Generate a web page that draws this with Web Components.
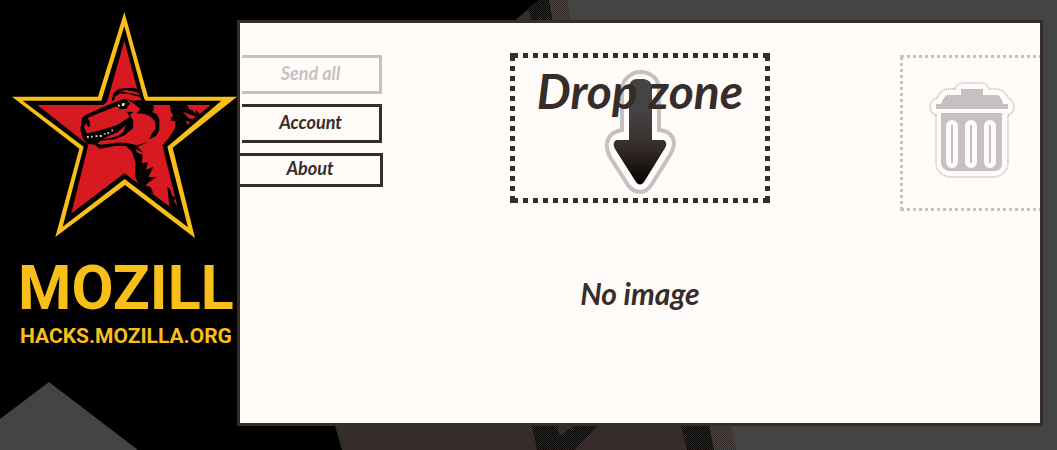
<!DOCTYPE html>
<html lang="en">
<head>
<meta charset="utf-8">
<title>Drop zone</title>
<style>
body { margin: 0; background: #000; }
</style>
</head>
<body>
<hacks-page>
  <hacks-brand slot="brand"></hacks-brand>
  <image-panel slot="panel">
    <menu-button slot="menu" disabled>Send all</menu-button>
    <menu-button slot="menu">Account</menu-button>
    <menu-button slot="menu" wide>About</menu-button>
    <drop-zone slot="drop">Drop zone</drop-zone>
    <trash-zone slot="trash"></trash-zone>
    No image
  </image-panel>
</hacks-page>
<script>
function define(name, html, setup) {
  const template = document.createElement('template');
  template.innerHTML = html;
  customElements.define(name, class extends HTMLElement {
    constructor() {
      super();
      this.attachShadow({ mode: 'open' }).append(template.content.cloneNode(true));
    }
    connectedCallback() { if (setup) setup(this); }
  });
}

define('hacks-page', `
<style>
:host {
  --ink: #362c2a; --paper: #fffbf9; --muted: #c5c1c2; --gold: #f8bf19;
  display: grid; grid-template-columns: 237px minmax(0, 1fr);
  box-sizing: border-box; min-height: 100vh; padding: 20px 14px 24px 0;
  position: relative; overflow: hidden; background: #000;
  font-family: Lato, "Liberation Sans", sans-serif; color: var(--ink);
}
.backdrop { position: absolute; inset: 0; width: 100%; height: 100%; }
::slotted(*) { position: relative; }
</style>
<svg class="backdrop" viewBox="0 0 1057 450" preserveAspectRatio="xMinYMin slice" aria-hidden="true">
  <defs>
    <pattern id="dark" width="2" height="2" patternUnits="userSpaceOnUse"><rect width="2" height="2" fill="#362c2a"/><rect width="1" height="1"/><rect x="1" y="1" width="1" height="1"/></pattern>
    <pattern id="light" width="2" height="2" patternUnits="userSpaceOnUse"><rect width="2" height="2" fill="#444"/><rect width="1" height="1" fill="#362c2a"/><rect x="1" y="1" width="1" height="1" fill="#362c2a"/></pattern>
  </defs>
  <path fill="#444" d="M0 419 49 382 138 450H0ZM553 0H1057V450H720Z"/>
  <path fill="#362c2a" d="M539 0H555L715 450H342L335 426 513 22Z"/>
  <path fill="url(#dark)" d="M539 0H549L553 22H532L528 8ZM532 426H557L560 436 574 426H597L575 450H537ZM681 426H709L714 450H687Z"/>
  <path fill="url(#light)" d="M549 0H567L571 22H553ZM709 426H731L737 450H714Z"/>
</svg>
<slot name="brand"></slot>
<slot name="panel"></slot>`);

define('hacks-brand', `
<style>
:host { display: block; color: var(--gold); font-family: Roboto, "Liberation Sans", sans-serif; font-weight: 700; white-space: nowrap; }
a { display: block; margin-top: -20px; color: inherit; text-decoration: none; }
svg { display: block; width: 240px; height: 245px; }
.name, .site { display: block; padding-left: 18px; }
.name { margin-top: 7px; font-size: 61px; line-height: 72px; }
.site { padding-left: 20px; font-size: 21px; line-height: 25px; }
</style>
<a href="#">
<svg viewBox="0 0 720 735" role="img" aria-label="Star with a dinosaur">
  <path fill="#f8bf19" d="M373 36 444 290H711L518 443 585 714 375 555 166 711 238 446 36 290H294Z"/>
  <path d="M373 78 434 302H664L502 440 564 682 374 537 188 680 251 440 68 302H304Z"/>
  <path fill="#d71920" d="M373 122 421 302 424 315H632L487 435 537 640 373 520 214 640 265 435 112 315H310L322 304Z"/>
  <path d="M335 302 340 280 357 266 400 263 412 267 424 280 436 302H440L462 318 460 333 443 343 410 340 421 327 408 316 385 300Z"/>
  <path d="M440 330 470 342 478 358 478 390 468 408 448 418 456 400 467 387 465 364 452 350 436 343Z"/>
  <path d="M510 312H645L556 390 500 440 487 437 508 412 525 385 527 365 511 361 519 346 512 334Z"/>
  <path fill="#d71920" d="M346 290 360 280 385 282 418 290 426 300 400 302 375 296 340 306ZM360 274 380 270 410 276 424 286 390 279Z"/>
  <path fill="#d71920" d="M560 315H632L599 342 587 329 586 341 574 326 575 335ZM547 334 563 341 588 350 596 343 578 358 566 355ZM556 362 571 366 563 374Z"/>
  <path d="M345 306 298 326 257 345 246 354 241 390 248 415 261 431 283 434 300 446 345 438 378 438 396 455 407 490 405 530 420 560 437 569 448 580 460 580 452 562 436 556 449 545 470 530 445 532 460 500 438 510 444 486 425 490 428 464 412 458 405 446 430 458 413 440 446 425 410 436 378 428 350 428 305 434 291 431 302 422 345 418 375 405 399 385 400 362 390 345 400 336 380 335 391 353 374 363 358 375 335 380 300 391 276 399 260 399 252 380 258 370 265 381 271 378 268 361 262 354 300 338 350 319 360 328 380 326 390 310 378 298 360 302Z"/>
  <path d="M262 400 300 392 350 376 390 350 398 370 396 386 370 404 340 414 300 420 262 424Z"/>
  <path fill="#d71920" d="M306 417 326 409 352 397 368 384 378 374 370 395 358 406 335 413Z"/>
  <path fill="#f7efcf" d="M260 408 267 409 264 417ZM273 407H278V413H274ZM286 406H292V411H287ZM299 405H305V411H300ZM311 400 317 399 315 406ZM321 397H328L325 404ZM334 388 340 389 336 396ZM353 313 361 316 356 321ZM365 312 370 308 375 311 372 318H366Z"/>
  <path d="M502 560 512 570 516 588 530 592 521 602 538 626V646L508 617Z"/>
</svg>
<span class="name">MOZILL</span>
<span class="site">HACKS.MOZILLA.ORG</span>
</a>`);

define('image-panel', `
<style>
:host {
  display: grid; grid-template: auto 1fr / minmax(0, 1fr) 260px minmax(0, 1fr);
  align-items: start; border: 3px solid var(--ink); background: var(--paper);
  padding-top: 30px; overflow: hidden;
}
nav { display: grid; gap: 10px; padding-top: 2px; justify-items: start; }
.trash { justify-self: end; padding-top: 2px; }
.status {
  grid-column: 1 / -1; margin: 0; padding-top: 64px; text-align: center;
  font-size: 30px; line-height: 36px; font-weight: 700; font-style: italic;
}
</style>
<nav><slot name="menu"></slot></nav>
<slot name="drop"></slot>
<div class="trash"><slot name="trash"></slot></div>
<p class="status"><slot></slot></p>`);

define('menu-button', `
<style>
:host { display: block; padding-left: 2px; }
:host([wide]) { padding-left: 0; }
button {
  display: block; box-sizing: border-box; width: 140px; height: 39px; padding: 0 0 4px;
  border: 3px solid var(--ink); border-left: 0; background: none; color: var(--ink);
  font: italic 700 18px/24px Lato, "Liberation Sans", sans-serif;
}
:host([wide]) button { width: 143px; height: 34px; }
button:disabled { color: var(--muted); border-color: var(--muted); }
</style>
<button type="button"><slot></slot></button>`,
host => { host.shadowRoot.querySelector('button').disabled = host.hasAttribute('disabled'); });

define('drop-zone', `
<style>
:host {
  --dot: linear-gradient(var(--ink), var(--ink));
  --across: linear-gradient(90deg, var(--ink) 50%, transparent 50%);
  --down: linear-gradient(var(--ink) 50%, transparent 50%);
  display: grid; place-items: start center; height: 150px;
  background:
    var(--dot) 0 0 / 5px 5px no-repeat, var(--dot) 100% 0 / 5px 5px no-repeat,
    var(--dot) 0 100% / 5px 5px no-repeat, var(--dot) 100% 100% / 5px 5px no-repeat,
    var(--across) 3px 0 / 10px 5px repeat-x, var(--across) 3px 100% / 10px 5px repeat-x,
    var(--down) 0 3px / 5px 10px repeat-y, var(--down) 100% 3px / 5px 10px repeat-y;
}
svg, span { grid-area: 1 / 1; }
svg { display: block; width: 80px; height: 130px; margin-top: 15px; }
span { position: relative; padding-top: 10px; font-size: 48px; line-height: 56px; font-weight: 700; font-style: italic; white-space: nowrap; }
</style>
<svg viewBox="0 0 80 130" aria-hidden="true">
  <defs><linearGradient id="shade" x1="0" y1="0" x2="0" y2="1"><stop offset=".3" stop-color="#444"/><stop offset=".65" stop-color="#362c2a"/><stop offset="1" stop-color="#000"/></linearGradient></defs>
  <path fill="none" stroke="#c5c1c2" stroke-width="4" d="M22 62V22Q22 14 28 9Q34 4 40 4Q48 4 54 9Q59 14 59 22V62Q72 63 74 74Q74 80 70 87L52 116Q47 124 40 124Q33 124 28 117L10 89Q6 81 7 75Q9 64 22 62Z"/>
  <path fill="url(#shade)" d="M29 72V19Q30 11 37 11H44Q51 12 52 19V72H64Q68 75 65 80L44 114Q40 119 36 114L15 81Q12 75 16 72Z"/>
</svg>
<span><slot></slot></span>`);

define('trash-zone', `
<style>
:host {
  --dot: linear-gradient(var(--muted), var(--muted));
  --across: linear-gradient(90deg, var(--muted) 50%, transparent 50%);
  --down: linear-gradient(var(--muted) 50%, transparent 50%);
  display: grid; place-items: start center; box-sizing: border-box;
  width: 140px; height: 156px; padding: 26px 0 0 4px;
  background:
    var(--dot) 0 0 / 3px 3px no-repeat, var(--dot) 0 100% / 3px 3px no-repeat,
    var(--across) 1px 0 / 6px 3px repeat-x, var(--across) 1px 100% / 6px 3px repeat-x,
    var(--down) 0 2px / 3px 6px repeat-y;
}
svg { display: block; width: 88px; height: 98px; }
</style>
<svg viewBox="0 0 88 98" role="img" aria-label="Trash">
  <g fill="#c5c1c2">
    <path d="M33 8H55V14H70Q74 17 75 23H80V28H8V23H13Q16 15 19 14H33Z"/>
    <path d="M13 32H74V84Q73 90 66 90H20Q14 88 13 83Z"/>
  </g>
  <path fill="none" stroke="#fffbf9" stroke-width="12" stroke-linecap="round" d="M24 45V81M43 45V81M62 45V81"/>
  <path fill="none" stroke="#c5c1c2" stroke-width="2" d="M24 44V82M43 44V82M62 44V82"/>
  <path fill="none" stroke="#c5c1c2" stroke-width="2" stroke-dasharray="1 1" d="M27 7Q30 2 36 2H53Q59 2 61 8H70Q77 10 80 17Q86 20 86 26Q85 33 80 34V80Q80 94 66 96H22Q9 94 8 82V34Q2 32 2 25Q3 19 9 17Q13 8 20 8H27Z"/>
</svg>`);
</script>
</body>
</html>
